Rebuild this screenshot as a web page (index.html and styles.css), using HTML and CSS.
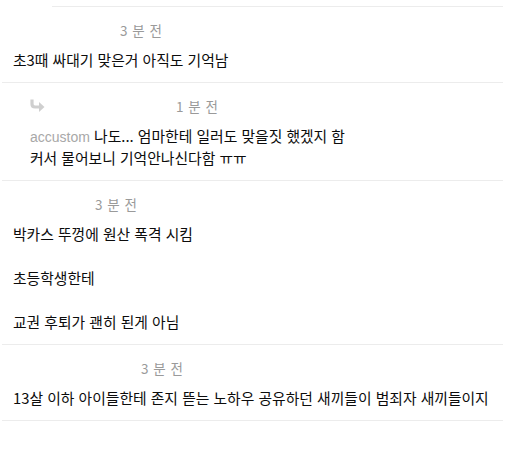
FILE: index.html
```html
<!DOCTYPE html>
<html lang="ko">
<head>
<meta charset="utf-8">
<link rel="stylesheet" href="styles.css">
</head>
<body>
<div class="comments">
  <div class="rule rule-indent"></div>

  <div class="comment">
    <div class="meta"><span class="nick nick-1"></span><span class="time">3 분 전</span></div>
    <div class="body">초3때 싸대기 맞은거 아직도 기억남</div>
  </div>

  <div class="comment reply">
    <div class="meta">
      <svg class="reply-icon" width="15" height="13" viewBox="0 0 15 13" aria-hidden="true">
        <path d="M2 0.5 V5 Q2 8 5 8 H10" fill="none" stroke="#cfcfcf" stroke-width="3.2"/>
        <path d="M9 3 L14.5 8 L9 13 Z" fill="#cfcfcf"/>
      </svg>
      <span class="nick nick-2"></span><span class="time">1 분 전</span>
    </div>
    <div class="body"><span class="mention">accustom</span> 나도... 엄마한테 일러도 맞을짓 했겠지 함<br>커서 물어보니 기억안나신다함 ㅠㅠ</div>
  </div>

  <div class="comment">
    <div class="meta"><span class="nick nick-3"></span><span class="time">3 분 전</span></div>
    <div class="body">박카스 뚜껑에 원산 폭격 시킴<br><br>초등학생한테<br><br>교권 후퇴가 괜히 된게 아님</div>
  </div>

  <div class="comment">
    <div class="meta"><span class="nick nick-4"></span><span class="time">3 분 전</span></div>
    <div class="body">13살 이하 아이들한테 존지 뜯는 노하우 공유하던 새끼들이 범죄자 새끼들이지</div>
  </div>
</div>
</body>
</html>
```

FILE: styles.css
```css
html, body {
  margin: 0;
  padding: 0;
  background: #fff;
}

body {
  font-family: "Noto Sans CJK KR", "Noto Sans", sans-serif;
  font-size: 14px;
  color: #111;
}

.comments {
  width: 501px;
  margin: 6px 0 0 2px;
}

.rule {
  height: 1px;
  background: #ececec;
}

.rule-indent {
  margin-left: 50px;
}

.comment {
  padding: 12px 0 11px 11px;
  border-bottom: 1px solid #ececec;
  display: flex;
  flex-direction: column;
  gap: 8px;
}

.comment.reply {
  padding-left: 28px;
}

.meta {
  display: flex;
  align-items: center;
  height: 22px;
  line-height: 22px;
}

.nick {
  display: inline-block;
}

.nick-1 { width: 107px; }
.nick-2 { width: 131px; }
.nick-3 { width: 82px; }
.nick-4 { width: 128px; }

.reply-icon {
  display: block;
  margin-left: 0;
  margin-top: -2px;
}

.time {
  color: #9a9a9a;
  font-size: 13.5px;
  letter-spacing: 0.5px;
}

.body {
  font-size: 14.8px;
  line-height: 22px;
  color: #0c0c0c;
}

.mention {
  color: #a8a8a8;
  font-family: "Liberation Sans", Arial, sans-serif;
  font-size: 14px;
  line-height: 1;
}
```
